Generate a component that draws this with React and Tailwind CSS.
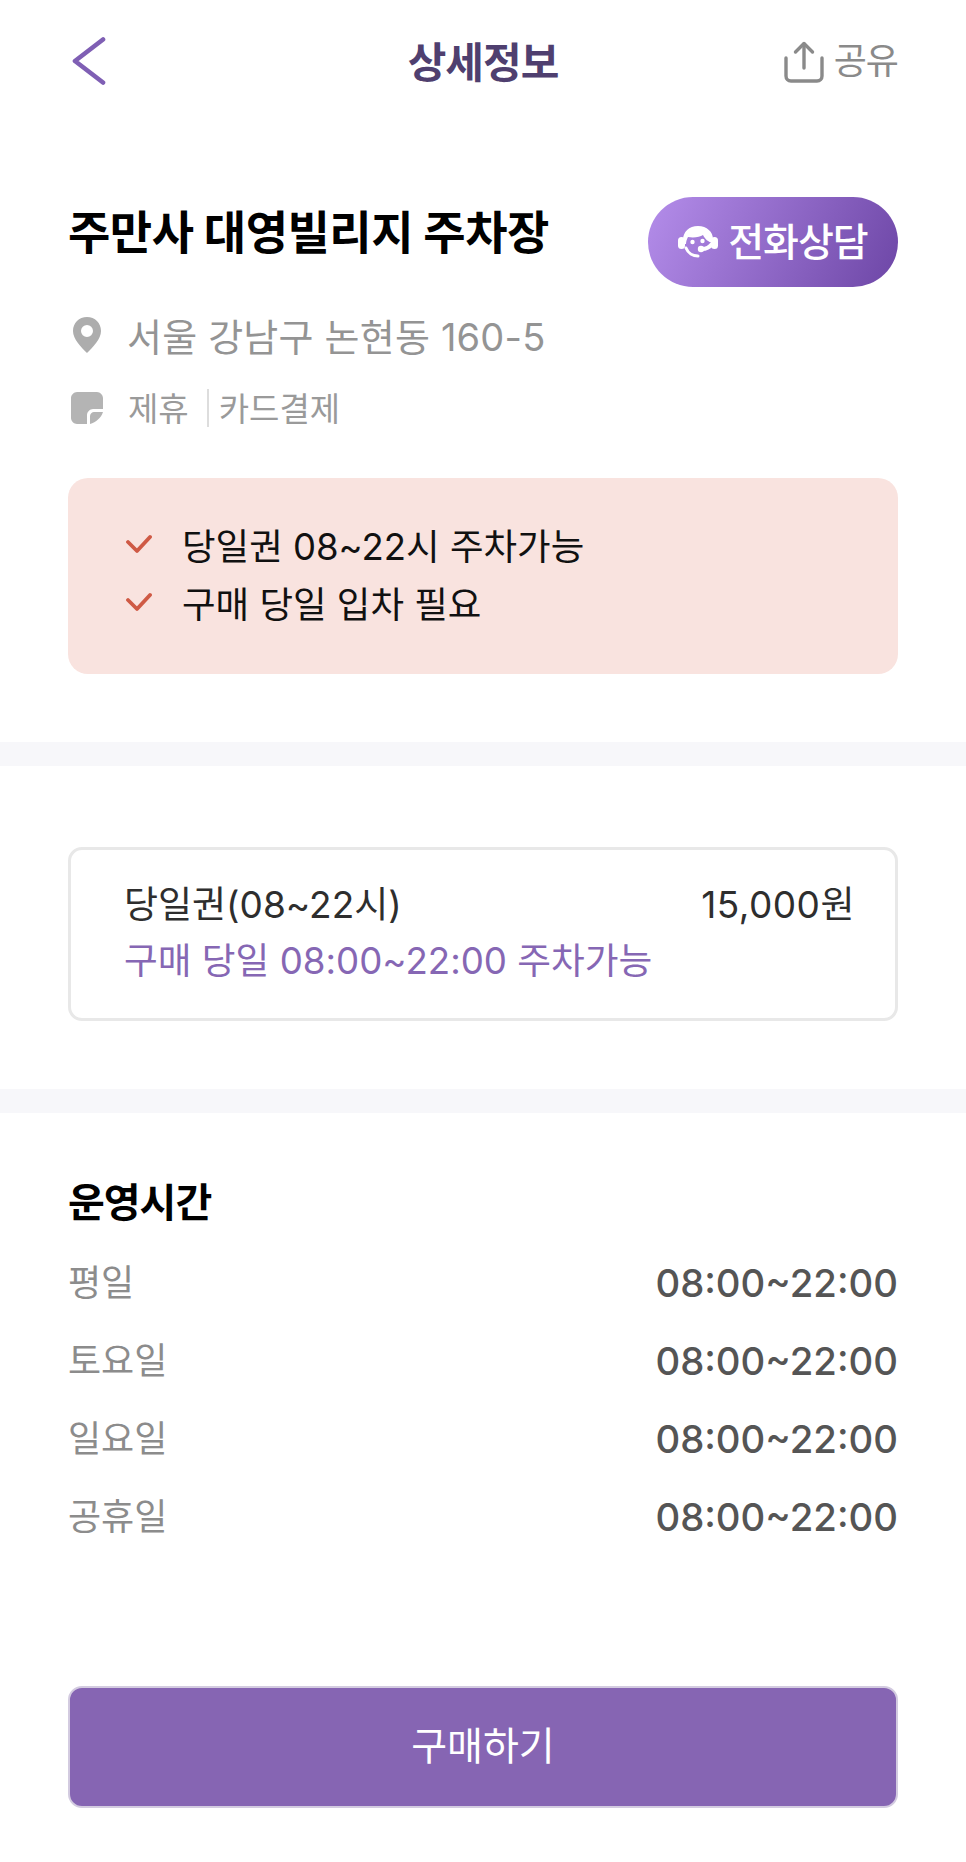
const hours = [
  { day: '평일', time: '08:00~22:00' },
  { day: '토요일', time: '08:00~22:00' },
  { day: '일요일', time: '08:00~22:00' },
  { day: '공휴일', time: '08:00~22:00' },
];

const notices = ['당일권 08~22시 주차가능', '구매 당일 입차 필요'];

const BackIcon = () => (
  <svg className="ml-[4px] mt-[2px]" width="34" height="48" viewBox="0 0 34 48" fill="none" stroke="#7f5fb4" strokeWidth="4.6" strokeLinecap="round" strokeLinejoin="round">
    <path d="M31 2.500L3 24l28 21.500" />
  </svg>
);

const ShareIcon = () => (
  <svg className="mt-[3px]" width="40" height="42" viewBox="0 0 40 42" fill="none" stroke="#8a8a8a" strokeWidth="3.4" strokeLinecap="round" strokeLinejoin="round">
    <path d="M20 27V3" />
    <path d="M11.500 11L20 2.500 28.500 11" />
    <path d="M2 17v18c0 3 2 5 5 5h26c3 0 5-2 5-5V17" />
  </svg>
);

const AgentIcon = () => (
  <svg width="40" height="34" viewBox="0 0 40 34" fill="none">
    <path fill="#fff" d="M20 1c9 0 15 6 15 13v4c-5-1-8-4-10-8-3 2-9 3-15 2-1 2-2 4-2 7H5v-4C5 7 11 1 20 1z" />
    <path stroke="#fff" strokeWidth="3" strokeLinecap="round" d="M8 23c2 5 7 8 12 8" />
    <path stroke="#fff" strokeWidth="4" strokeLinecap="round" d="M34 19c-3 4-6 5-10 5" />
    <rect x="0" y="12" width="7" height="12" rx="3.500" fill="#fff" />
    <rect x="33" y="12" width="7" height="12" rx="3.500" fill="#fff" />
    <circle cx="14.500" cy="17" r="2.200" fill="#fff" />
    <circle cx="24.500" cy="16" r="2.200" fill="#fff" />
    <circle cx="23" cy="24" r="3.200" fill="#fff" />
  </svg>
);

const PinIcon = () => (
  <svg width="28" height="36" viewBox="0 0 28 36">
    <path fill="#adadad" fillRule="evenodd" d="M14 0c8 0 14 6 14 14 0 8-8 16-14 22C8 30 0 22 0 14 0 6 6 0 14 0zm0 8a6 6 0 1 0 0 12 6 6 0 0 0 0-12z" />
  </svg>
);

const NoteIcon = () => (
  <svg width="32" height="32" viewBox="0 0 32 32">
    <path fill="#b4b4b4" d="M6 0h20c3 0 6 3 6 6v11H22c-3 0-6 3-6 6v9H6c-3 0-6-3-6-6V6c0-3 3-6 6-6z" />
    <path fill="#b4b4b4" d="M19 32v-8c0-2 2-4 4-4h9c-2 6-7 10-13 12z" />
  </svg>
);

const CheckIcon = () => (
  <svg width="26" height="20" viewBox="0 0 26 20" fill="none" stroke="#cf5a45" strokeWidth="3.8" strokeLinecap="round" strokeLinejoin="round">
    <path d="M2 8l9 9L24 3" />
  </svg>
);

const App = () => {
  return (
    <div className="w-[966px] h-[1862px] bg-white font-['Inter','Noto_Sans_CJK_KR',sans-serif] overflow-hidden">
      {/* header */}
      <div className="grid grid-cols-[1fr_auto_1fr] items-center h-[120px] px-[68px]">
        <BackIcon />
        <h1 className="pt-[4px] text-[42px] font-bold text-[#4f3f6f] tracking-[-1px]">상세정보</h1>
        <div className="flex items-center justify-end gap-[10px] text-[36px] text-[#8a8a8a]">
          <ShareIcon />
          <span className="pt-[2px] tracking-[-1px]">공유</span>
        </div>
      </div>

      {/* parking info */}
      <div className="px-[68px] pt-[77px]">
        <div className="flex items-center justify-between">
          <h2 className="text-[46px] font-bold text-black tracking-[-0.5px] -mt-[19px]">주만사 대영빌리지 주차장</h2>
          <button className="flex items-center justify-center gap-[10px] w-[250px] h-[90px] rounded-[45px] bg-[linear-gradient(115deg,#b48dea,#6d46a6)] text-white text-[39px] font-medium">
            <AgentIcon />
            <span className="tracking-[-1px]">전화상담</span>
          </button>
        </div>
        <div className="flex items-center gap-[26px] mt-[26px] pl-[5px] h-[44px]">
          <PinIcon />
          <span className="pt-[4px] text-[38px] tracking-[0.2px] text-[#949494]">서울 강남구 논현동 160-5</span>
        </div>
        <div className="flex items-center mt-[29px] pl-[3px] h-[44px] text-[33px] text-[#9a9a9a]">
          <NoteIcon />
          <span className="ml-[25px] pt-[4px]">제휴</span>
          <span className="w-[2px] h-[38px] bg-[#dddddd] ml-[18px] mr-[10px]" />
          <span className="pt-[4px]">카드결제</span>
        </div>
        <div className="mt-[48px] h-[196px] rounded-[20px] bg-[#f9e3df] pl-[58px] pt-[42px] flex flex-col gap-[10px]">
          {notices.map((text) => (
            <div key={text} className="flex items-center gap-[30px] h-[48px]">
              <CheckIcon />
              <span className="pt-[6px] text-[36.500px] text-[#111111]">{text}</span>
            </div>
          ))}
        </div>
      </div>

      <div className="h-[24px] mt-[68px] bg-[#f7f7fa]" />

      {/* ticket */}
      <div className="px-[68px] pt-[81px]">
        <div className="h-[174px] rounded-[14px] border-[3px] border-[#e8e8e8] pl-[53px] pr-[40px] pt-[30px]">
          <div className="flex items-center justify-between h-[50px] text-[37px] text-[#2e2e2e]">
            <span>당일권(08~22시)</span>
            <span className="tracking-[0.5px]">15,000원</span>
          </div>
          <div className="mt-[7px] text-[36.700px] leading-[48px] text-[#8667b4]">구매 당일 08:00~22:00 주차가능</div>
        </div>
      </div>

      <div className="h-[24px] mt-[68px] bg-[#f7f7fa]" />

      {/* hours */}
      <div className="px-[68px] pt-[66px]">
        <h3 className="text-[40px] leading-[48px] font-bold text-black tracking-[-1px]">운영시간</h3>
        <div className="mt-[32px] flex flex-col gap-[30px]">
          {hours.map((row) => (
            <div key={row.day} className="flex items-center justify-between h-[48px]">
              <span className="text-[36px] text-[#8c8c8c]">{row.day}</span>
              <span className="text-[38.300px] font-[450] text-[#555555] mt-[1px]">{row.time}</span>
            </div>
          ))}
        </div>
        <button className="mt-[145px] w-full h-[122px] pb-[2px] rounded-[14px] border-[2px] border-[#d3cbe0] bg-[#8665b3] text-white text-[39px]">
          구매하기
        </button>
      </div>
    </div>
  );
};

export default App;
